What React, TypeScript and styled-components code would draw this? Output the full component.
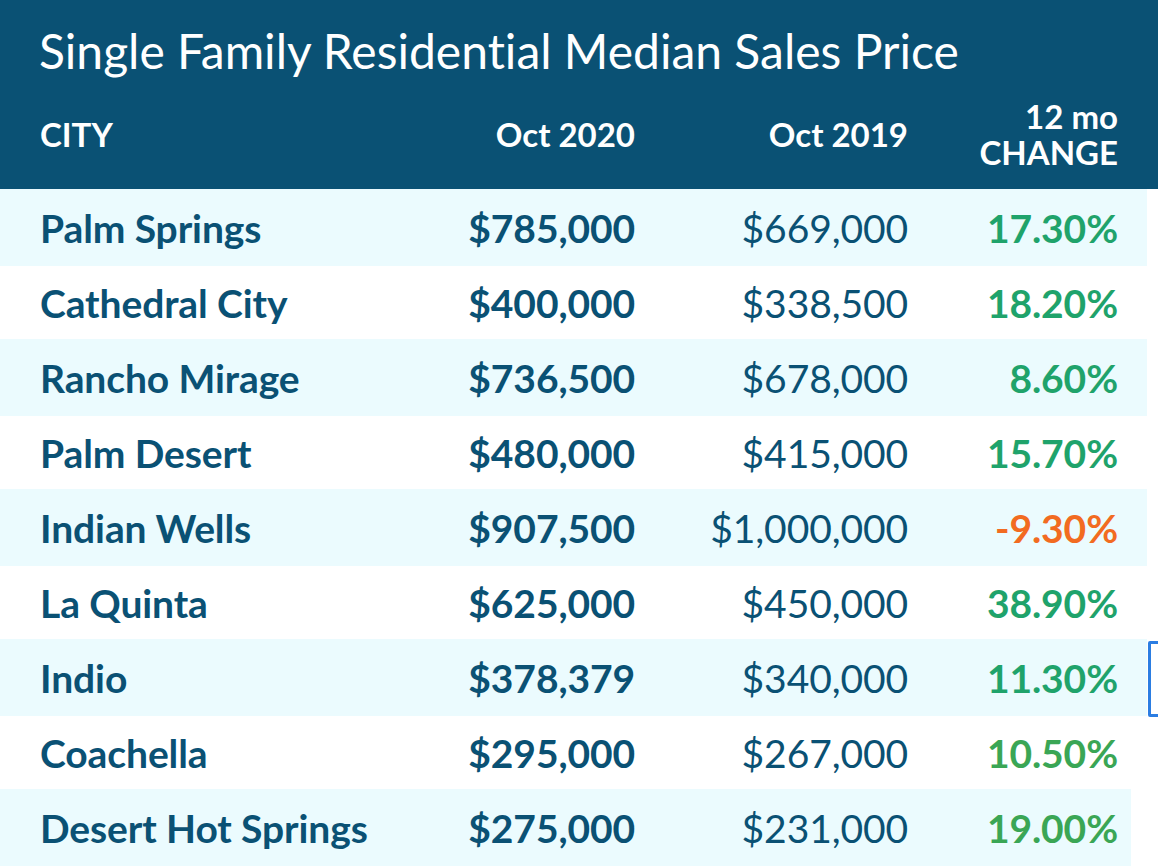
import styled, { createGlobalStyle } from 'styled-components';

const GlobalStyle = createGlobalStyle`
  html, body {
    margin: 0;
    padding: 0;
    background: #ffffff;
  }
  body {
    font-family: Lato, "Open Sans", "Liberation Sans", sans-serif;
    font-variant-ligatures: none;
    width: 1158px;
    overflow: hidden;
  }
`;

const colors = {
  navy: '#0a5174',
  rowLight: '#ebfbfe',
  green: '#1fa36b',
  greenLight: '#3aa655',
  orange: '#f26b21',
  focus: '#2b7de2',
};

const Page = styled.div`
  position: relative;
  width: 1158px;
  height: 868px;
  background: #ffffff;
`;

const Header = styled.header`
  background: ${colors.navy};
  color: #ffffff;
  height: 189px;
  box-sizing: border-box;
  padding: 20px 0 0 0;
`;

const Title = styled.h1`
  margin: 0;
  padding-left: 39px;
  font-size: 48px;
  font-weight: 400;
  line-height: 62px;
`;

const gridCols = '360px 235px 273px 210px';

const HeadRow = styled.div`
  display: grid;
  grid-template-columns: ${gridCols};
  align-items: center;
  padding-left: 40px;
  height: 104px;
`;

const HeadCell = styled.div<{ $align?: 'left' | 'right' }>`
  text-align: ${({ $align }) => $align ?? 'right'};
  font-size: 33px;
  font-weight: 700;
  line-height: 36px;
`;

const HeadLine = styled.span`
  display: block;
  line-height: 36px;
`;

const Body = styled.div`
  display: flex;
  flex-direction: column;
`;

const Row = styled.div<{ $shade: boolean; $width: number }>`
  display: grid;
  grid-template-columns: ${gridCols};
  align-items: center;
  padding-left: 40px;
  height: ${({ $shade }) => ($shade ? 77 : 73)}px;
  width: ${({ $width }) => $width}px;
  box-sizing: border-box;
  background: ${({ $shade }) => ($shade ? colors.rowLight : '#ffffff')};
  color: ${colors.navy};
`;

const Cell = styled.div<{ $align?: 'left' | 'right'; $weight?: number; $color?: string }>`
  text-align: ${({ $align }) => $align ?? 'right'};
  font-size: 39px;
  font-weight: ${({ $weight }) => $weight ?? 700};
  color: ${({ $color }) => $color ?? 'inherit'};
  letter-spacing: -0.1px;
  white-space: nowrap;
`;

const FocusRing = styled.div`
  position: absolute;
  left: 1148px;
  top: 641px;
  width: 20px;
  height: 70px;
  border: 3px solid ${colors.focus};
  border-radius: 2px;
`;

type Entry = {
  city: string;
  now: string;
  prev: string;
  change: string;
  tone: 'green' | 'greenLight' | 'orange';
};

const rows: Entry[] = [
  { city: 'Palm Springs', now: '$785,000', prev: '$669,000', change: '17.30%', tone: 'green' },
  { city: 'Cathedral City', now: '$400,000', prev: '$338,500', change: '18.20%', tone: 'green' },
  { city: 'Rancho Mirage', now: '$736,500', prev: '$678,000', change: '8.60%', tone: 'green' },
  { city: 'Palm Desert', now: '$480,000', prev: '$415,000', change: '15.70%', tone: 'green' },
  { city: 'Indian Wells', now: '$907,500', prev: '$1,000,000', change: '-9.30%', tone: 'orange' },
  { city: 'La Quinta', now: '$625,000', prev: '$450,000', change: '38.90%', tone: 'green' },
  { city: 'Indio', now: '$378,379', prev: '$340,000', change: '11.30%', tone: 'green' },
  { city: 'Coachella', now: '$295,000', prev: '$267,000', change: '10.50%', tone: 'greenLight' },
  { city: 'Desert Hot Springs', now: '$275,000', prev: '$231,000', change: '19.00%', tone: 'greenLight' },
];

export default function App() {
  return (
    <Page>
      <GlobalStyle />
      <Header>
        <Title>Single Family Residential Median Sales Price</Title>
        <HeadRow>
          <HeadCell $align="left">CITY</HeadCell>
          <HeadCell>Oct 2020</HeadCell>
          <HeadCell>Oct 2019</HeadCell>
          <HeadCell>
            <HeadLine>12 mo</HeadLine>
            <HeadLine>CHANGE</HeadLine>
          </HeadCell>
        </HeadRow>
      </Header>
      <Body>
        {rows.map((r, i) => (
          <Row key={r.city} $shade={i % 2 === 0} $width={i === rows.length - 1 ? 1131 : 1147}>
            <Cell $align="left">{r.city}</Cell>
            <Cell>{r.now}</Cell>
            <Cell $weight={400}>{r.prev}</Cell>
            <Cell $color={colors[r.tone]}>{r.change}</Cell>
          </Row>
        ))}
      </Body>
      <FocusRing />
    </Page>
  );
}
